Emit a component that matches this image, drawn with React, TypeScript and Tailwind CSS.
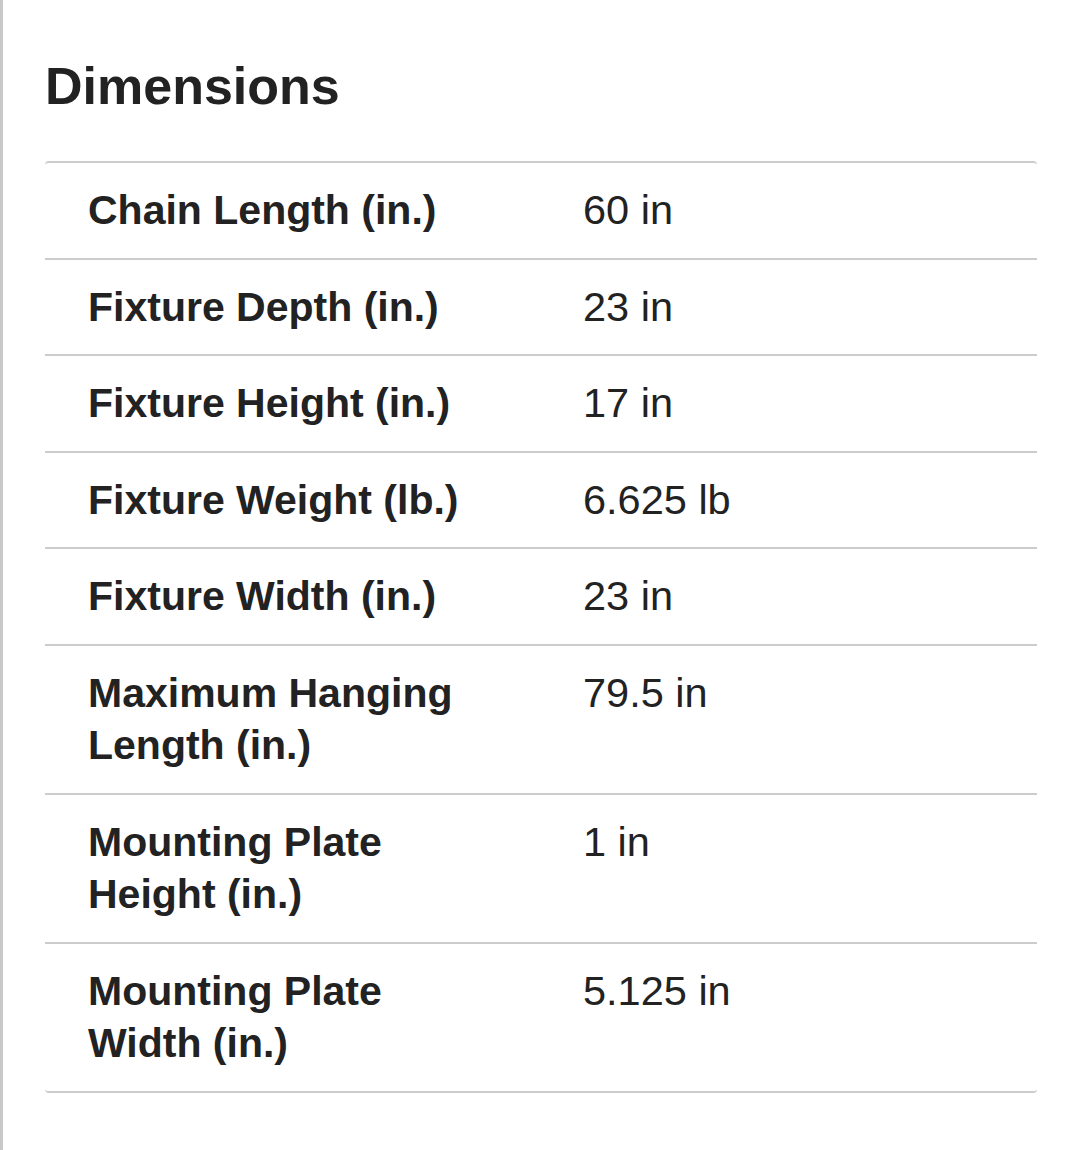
import React from "react";

const rows: [string, string][] = [
  ["Chain Length (in.)", "60 in"],
  ["Fixture Depth (in.)", "23 in"],
  ["Fixture Height (in.)", "17 in"],
  ["Fixture Weight (lb.)", "6.625 lb"],
  ["Fixture Width (in.)", "23 in"],
  ["Maximum Hanging Length (in.)", "79.5 in"],
  ["Mounting Plate Height (in.)", "1 in"],
  ["Mounting Plate Width (in.)", "5.125 in"],
];

export default function App() {
  return (
    <div
      className="min-h-[1150px] w-[1080px] bg-white border-l-[3px] border-[#c8c8c8] text-[#222222]"
      style={{ fontFamily: '"Liberation Sans", Arial, sans-serif' }}
    >
      <div className="pl-[42px] pr-[43px]">
        <h2 className="pt-[60px] mb-[49px] text-[52px] leading-none font-bold">Dimensions</h2>
        <div className="border-t-2 border-b-2 border-[#cccccc] rounded-[4px]">
          {rows.map(([label, value], i) => (
            <div
              key={label}
              className={`grid grid-cols-[538px_1fr] leading-[52.5px] ${
                i < rows.length - 1 ? "border-b-2 border-[#cccccc]" : ""
              }`}
            >
              <div className="pl-[43px] pr-[100px] py-[21px] text-[41px] font-bold">{label}</div>
              <div className="py-[21px] text-[41.5px]">{value}</div>
            </div>
          ))}
        </div>
      </div>
    </div>
  );
}
